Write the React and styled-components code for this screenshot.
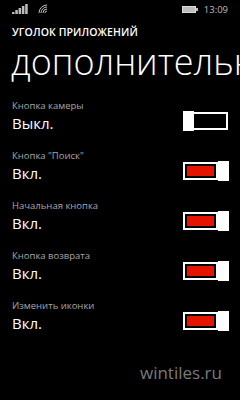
import React from 'react'
import styled, { createGlobalStyle } from 'styled-components'

const Global = createGlobalStyle`
  html, body {
    margin: 0;
    padding: 0;
    background: #000;
  }
  body {
    font-family: "Open Sans", "Noto Sans", sans-serif;
    color: #fff;
  }
`

const Screen = styled.div`
  width: 240px;
  height: 400px;
  background: #000;
  overflow: hidden;
  display: flex;
  flex-direction: column;
`

const StatusBar = styled.div`
  height: 18px;
  display: flex;
  align-items: center;
  padding: 0 12px;
  gap: 6px;
  color: #bdbdbd;
  font-size: 9.5px;
`

const Spacer = styled.div`
  flex: 1;
`

const AppTitle = styled.div`
  margin-top: 8px;
  padding-left: 12px;
  font-size: 10.5px;
  font-weight: 600;
  letter-spacing: 0.1px;
  line-height: 12px;
`

const PageTitle = styled.div`
  margin-top: 4px;
  padding-left: 11px;
  font-size: 36px;
  font-weight: 300;
  line-height: 40px;
  white-space: nowrap;
`

const List = styled.div`
  margin-top: 17px;
  display: flex;
  flex-direction: column;
  gap: 16px;
`

const Row = styled.div`
  display: flex;
  align-items: flex-end;
  padding: 0 12px;
  height: 34px;
`

const Texts = styled.div`
  flex: 1;
  display: flex;
  flex-direction: column;
`

const Label = styled.div`
  font-size: 9.5px;
  color: #a6a6a6;
  line-height: 14px;
`

const Value = styled.div`
  font-size: 15px;
  line-height: 20px;
`

const Toggle = styled.div`
  position: relative;
  width: 46px;
  height: 20px;
  margin-bottom: 2px;
  margin-right: -1px;
`

const Track = styled.div`
  position: absolute;
  left: 0;
  top: 1px;
  width: ${p => (p.$on ? '35px' : '45px')};
  height: 18px;
  box-sizing: border-box;
  border: 2px solid #fff;
  padding: 2px;
  display: flex;
`

const Fill = styled.div`
  flex: 1;
  background: #e51400;
`

const Thumb = styled.div`
  position: absolute;
  top: 0;
  ${p => (p.$on ? 'right: 0;' : 'left: 0;')}
  width: 11px;
  height: 20px;
  background: #fff;
`

const Watermark = styled.div`
  margin-top: auto;
  margin-bottom: 16px;
  padding-right: 18px;
  text-align: right;
  font-size: 17px;
  color: #7a7a7a;
`

function Signal() {
  return (
    <svg width="16" height="10" viewBox="0 0 16 10">
      <rect x="0" y="8" width="2.5" height="2" fill="#bdbdbd" />
      <rect x="3.3" y="6" width="2.5" height="4" fill="#bdbdbd" />
      <rect x="6.6" y="4" width="2.5" height="6" fill="#bdbdbd" />
      <rect x="9.9" y="2" width="2.5" height="8" fill="#bdbdbd" />
      <rect x="13.2" y="0" width="2.5" height="10" fill="#bdbdbd" />
    </svg>
  )
}

function Wifi() {
  return (
    <svg width="10" height="10" viewBox="0 0 10 10" style={{ marginLeft: 4 }}>
      <g fill="none" stroke="#bdbdbd" strokeWidth="1">
        <path d="M1 9 A8 8 0 0 1 9 1" />
        <path d="M3 9 A6 6 0 0 1 9 3" />
        <path d="M5 9 A4 4 0 0 1 9 5" />
        <path d="M7 9 A2 2 0 0 1 9 7" />
      </g>
    </svg>
  )
}

function Battery() {
  return (
    <svg width="16" height="7" viewBox="0 0 16 7">
      <rect x="0.5" y="0.5" width="13" height="6" fill="#bdbdbd" stroke="#dcdcdc" />
      <rect x="14" y="2" width="2" height="3" fill="#bdbdbd" />
    </svg>
  )
}

const settings = [
  { label: 'Кнопка камеры', on: false },
  { label: 'Кнопка "Поиск"', on: true },
  { label: 'Начальная кнопка', on: true },
  { label: 'Кнопка возврата', on: true },
  { label: 'Изменить иконки', on: true },
]

export default function App() {
  return (
    <Screen>
      <Global />
      <StatusBar>
        <Signal />
        <Wifi />
        <Spacer />
        <Battery />
        <span>13:09</span>
      </StatusBar>
      <AppTitle>УГОЛОК ПРИЛОЖЕНИЙ</AppTitle>
      <PageTitle>дополнительно</PageTitle>
      <List>
        {settings.map(s => (
          <Row key={s.label}>
            <Texts>
              <Label>{s.label}</Label>
              <Value>{s.on ? 'Вкл.' : 'Выкл.'}</Value>
            </Texts>
            <Toggle>
              <Track $on={s.on}>{s.on && <Fill />}</Track>
              <Thumb $on={s.on} />
            </Toggle>
          </Row>
        ))}
      </List>
      <Watermark>wintiles.ru</Watermark>
    </Screen>
  )
}
